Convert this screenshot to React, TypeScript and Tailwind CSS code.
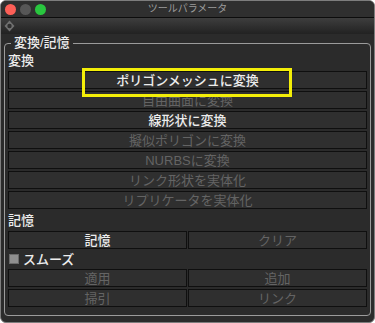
import React from "react";

const font = { fontFamily: '"Liberation Sans", "Noto Sans CJK JP", sans-serif' };

function Btn({ label, enabled = false }: { label: string; enabled?: boolean }) {
  return (
    <div
      className={
        "flex-1 h-[18px] flex items-center justify-center border border-[#0f0f0f] bg-[#2f2f2f] text-[13px] leading-none " +
        (enabled ? "text-[#ececec] font-medium" : "text-[#646464]")
      }
    >
      {label}
    </div>
  );
}

function Label({ text }: { text: string }) {
  return (
    <div className="h-[18px] flex items-center text-[13px] font-medium text-[#ededed] leading-none">
      {text}
    </div>
  );
}

export default function App() {
  const convert = [
    { label: "ポリゴンメッシュに変換", enabled: true },
    { label: "自由曲面に変換" },
    { label: "線形状に変換", enabled: true },
    { label: "擬似ポリゴンに変換" },
    { label: "NURBSに変換" },
    { label: "リンク形状を実体化" },
    { label: "リプリケータを実体化" },
  ];

  return (
    <div className="relative w-[375px] h-[323px] bg-white" style={font}>
      <div className="w-full h-full flex flex-col rounded-[6px] overflow-hidden border border-[#7d7d7d] bg-[#2b2b2b]">
        {/* title bar */}
        <div className="relative h-[17px] shrink-0 flex items-center bg-[#2f2f2f] border-b border-[#0c0c0c]">
          <div className="flex gap-[4px] pl-[4px]">
            <span className="w-[11px] h-[11px] rounded-full bg-[#fd5f57]" />
            <span className="w-[11px] h-[11px] rounded-full bg-[#575757]" />
            <span className="w-[11px] h-[11px] rounded-full bg-[#29c63f]" />
          </div>
          <div className="absolute inset-0 flex items-center justify-center text-[10px] text-[#9c9c9c] leading-none">
            ツールパラメータ
          </div>
        </div>

        {/* toolbar */}
        <div className="h-[16px] shrink-0 flex items-center pl-[3px] bg-gradient-to-b from-[#3e3e3e] to-[#222222]">
          <svg width="11" height="12" viewBox="0 0 11 12">
            <polygon points="5.5,0.5 10.5,6 5.5,11.5 0.5,6" fill="#707070" />
            <circle cx="5.5" cy="6" r="2.2" fill="#2f2f2f" />
          </svg>
        </div>

        {/* content */}
        <div className="flex-1 px-[3px] pt-[1px] pb-[6px]">
          <fieldset className="h-full border border-[#9b9b9b] rounded-[4px] px-[3px]">
            <legend className="ml-[3px] px-[3px] text-[13px] font-medium text-[#ededed] leading-[16px]">
              変換/記憶
            </legend>
            <div className="flex flex-col gap-[2px]">
              <Label text="変換" />
              {convert.map((b) => (
                <div key={b.label} className="flex">
                  <Btn label={b.label} enabled={b.enabled} />
                </div>
              ))}
              <Label text="記憶" />
              <div className="flex gap-[1px]">
                <Btn label="記憶" enabled />
                <Btn label="クリア" />
              </div>
              <div className="h-[16px] flex items-center gap-[4px] pl-[1px]">
                <span className="w-[10px] h-[10px] bg-[#8f8f8f] border border-[#6a6a6a]" />
                <span className="text-[13px] font-medium text-[#ededed] leading-none">スムーズ</span>
              </div>
              <div className="flex gap-[1px]">
                <Btn label="適用" />
                <Btn label="追加" />
              </div>
              <div className="flex gap-[1px]">
                <Btn label="掃引" />
                <Btn label="リンク" />
              </div>
            </div>
          </fieldset>
        </div>
      </div>

      {/* highlight */}
      <div className="absolute left-[82px] top-[68px] w-[210px] h-[29px] border-[3px] border-[#f3ee08]" />
    </div>
  );
}
